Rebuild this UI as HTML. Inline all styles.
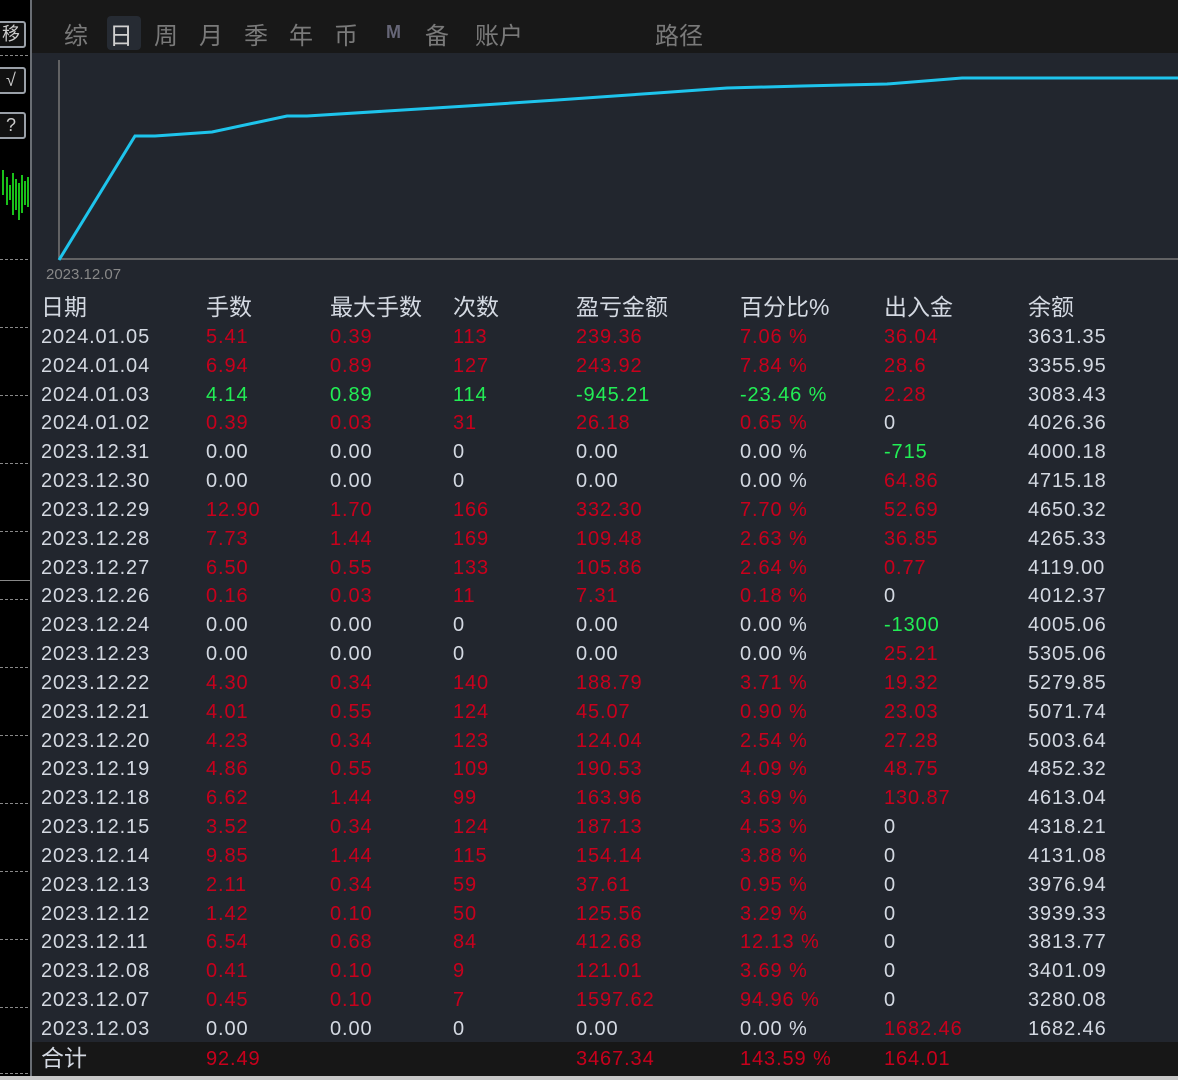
<!DOCTYPE html>
<html><head><meta charset="utf-8"><style>
*{margin:0;padding:0;box-sizing:border-box}
body{width:1178px;height:1080px;background:#000;position:relative;overflow:hidden;font-family:"Liberation Sans","Noto Sans CJK SC",sans-serif}
#left{position:absolute;left:0;top:0;width:30px;height:1080px;background:#000}
.btn{position:absolute;left:-4px;width:30px;height:27px;border:2px solid #9aa0a8;border-radius:3px;color:#ccc;font-size:18px;text-align:center;line-height:22px;background:#111}
.dash{position:absolute;left:0;width:28px;border-top:1px dashed #888}
#main{position:absolute;left:30px;top:0;width:1148px;height:1077px;background:#22262e;border-left:2px solid #6a6e74}
#tabs{position:absolute;left:0;top:0;width:1148px;height:53px;background:#181818}
.tab{position:absolute;top:16px;font-size:24px;color:#7a7a7a}
.cell{position:absolute;font-size:20px;white-space:nowrap;line-height:24px;letter-spacing:0.9px}
.w{color:#d4d9e2}.r{color:#c8001c}.g{color:#22ee55}
#foot{position:absolute;left:0;top:1042px;width:1148px;height:35px;background:#171717}
#bot{position:absolute;left:0;top:1076px;width:1178px;height:4px;background:#c8c8c8}
</style></head><body>
<div id="left">
<div class="btn" style="top:21px">移</div>
<div class="dash" style="top:55px"></div>
<div class="btn" style="top:67px">√</div>
<div class="btn" style="top:112px">?</div>
<svg style="position:absolute;left:0;top:165px" width="30" height="60"><g stroke="#2f2" stroke-width="1.5"><path d="M3 5V30M7 12V40M10 20V35M13 8V50M16 14V45M19 18V55M22 10V48M25 16V40M28 12V42"/></g></svg>
<div class="dash" style="top:259px"></div>
<div class="dash" style="top:327px"></div>
<div class="dash" style="top:395px"></div>
<div class="dash" style="top:463px"></div>
<div class="dash" style="top:531px"></div>
<div style="position:absolute;left:0;top:580px;width:30px;border-top:1px solid #888"></div>
<div class="dash" style="top:599px"></div>
<div class="dash" style="top:667px"></div>
<div class="dash" style="top:735px"></div>
<div class="dash" style="top:803px"></div>
<div class="dash" style="top:871px"></div>
<div class="dash" style="top:939px"></div>
<div class="dash" style="top:1007px"></div>
<div class="dash" style="top:1073px"></div>
</div>
<div id="main">
<div id="tabs">
<div style="position:absolute;left:75px;top:16px;width:34px;height:34px;background:#262b33;border-radius:4px"></div>
<div class="tab" style="left:32px">综</div>
<div class="tab" style="left:77px;color:#d0d0d0">日</div>
<div class="tab" style="left:122px">周</div>
<div class="tab" style="left:167px">月</div>
<div class="tab" style="left:212px">季</div>
<div class="tab" style="left:257px">年</div>
<div class="tab" style="left:302px">币</div>
<div class="tab" style="left:354px;font-size:18px;top:22px;font-weight:bold;color:#667">M</div>
<div class="tab" style="left:393px">备</div>
<div class="tab" style="left:443px">账户</div>
<div class="tab" style="left:623px">路径</div>
</div>
<svg style="position:absolute;left:0;top:53px" width="1148" height="230">
<path d="M27 7V206H1148" stroke="#777" stroke-width="1.5" fill="none"/>
<polyline points="27,207 103,83 123,83 180,79 255,63 275,63 435,53 525,47 625,40 695,35 770,33 855,31 930,25 1148,25" stroke="#1ec4ec" stroke-width="3" fill="none"/>
<text x="14" y="226" fill="#888" font-size="15" font-family="Liberation Sans">2023.12.07</text>
</svg>
<div id="foot"></div>
</div>
<div id="bot"></div>
<div style="position:absolute;left:30px;top:0">
<div class="cell w" style="left:11px;top:295px;font-size:23px;letter-spacing:0">日期</div>
<div class="cell w" style="left:176px;top:295px;font-size:23px;letter-spacing:0">手数</div>
<div class="cell w" style="left:300px;top:295px;font-size:23px;letter-spacing:0">最大手数</div>
<div class="cell w" style="left:423px;top:295px;font-size:23px;letter-spacing:0">次数</div>
<div class="cell w" style="left:546px;top:295px;font-size:23px;letter-spacing:0">盈亏金额</div>
<div class="cell w" style="left:710px;top:295px;font-size:23px;letter-spacing:0">百分比%</div>
<div class="cell w" style="left:854px;top:295px;font-size:23px;letter-spacing:0">出入金</div>
<div class="cell w" style="left:998px;top:295px;font-size:23px;letter-spacing:0">余额</div>
<div id="t"></div>
</div>
<script>
var d=[
["2024.01.05","r5.41","r0.39","r113","r239.36","r7.06 %","r36.04","3631.35"],
["2024.01.04","r6.94","r0.89","r127","r243.92","r7.84 %","r28.6","3355.95"],
["2024.01.03","g4.14","g0.89","g114","g-945.21","g-23.46 %","r2.28","3083.43"],
["2024.01.02","r0.39","r0.03","r31","r26.18","r0.65 %","w0","4026.36"],
["2023.12.31","w0.00","w0.00","w0","w0.00","w0.00 %","g-715","4000.18"],
["2023.12.30","w0.00","w0.00","w0","w0.00","w0.00 %","r64.86","4715.18"],
["2023.12.29","r12.90","r1.70","r166","r332.30","r7.70 %","r52.69","4650.32"],
["2023.12.28","r7.73","r1.44","r169","r109.48","r2.63 %","r36.85","4265.33"],
["2023.12.27","r6.50","r0.55","r133","r105.86","r2.64 %","r0.77","4119.00"],
["2023.12.26","r0.16","r0.03","r11","r7.31","r0.18 %","w0","4012.37"],
["2023.12.24","w0.00","w0.00","w0","w0.00","w0.00 %","g-1300","4005.06"],
["2023.12.23","w0.00","w0.00","w0","w0.00","w0.00 %","r25.21","5305.06"],
["2023.12.22","r4.30","r0.34","r140","r188.79","r3.71 %","r19.32","5279.85"],
["2023.12.21","r4.01","r0.55","r124","r45.07","r0.90 %","r23.03","5071.74"],
["2023.12.20","r4.23","r0.34","r123","r124.04","r2.54 %","r27.28","5003.64"],
["2023.12.19","r4.86","r0.55","r109","r190.53","r4.09 %","r48.75","4852.32"],
["2023.12.18","r6.62","r1.44","r99","r163.96","r3.69 %","r130.87","4613.04"],
["2023.12.15","r3.52","r0.34","r124","r187.13","r4.53 %","w0","4318.21"],
["2023.12.14","r9.85","r1.44","r115","r154.14","r3.88 %","w0","4131.08"],
["2023.12.13","r2.11","r0.34","r59","r37.61","r0.95 %","w0","3976.94"],
["2023.12.12","r1.42","r0.10","r50","r125.56","r3.29 %","w0","3939.33"],
["2023.12.11","r6.54","r0.68","r84","r412.68","r12.13 %","w0","3813.77"],
["2023.12.08","r0.41","r0.10","r9","r121.01","r3.69 %","w0","3401.09"],
["2023.12.07","r0.45","r0.10","r7","r1597.62","r94.96 %","w0","3280.08"],
["2023.12.03","w0.00","w0.00","w0","w0.00","w0.00 %","r1682.46","1682.46"]];
var xs=[11,176,300,423,546,710,854,998],h="";
d.forEach(function(r,i){var y=325+i*28.83;r.forEach(function(c,j){var cl="w",t=c;if(j>0&&j<7){cl=c[0];t=c.slice(1)}h+='<div class="cell '+cl+'" style="left:'+xs[j]+'px;top:'+y+'px">'+t+'</div>'})});
var fy=1046;h+='<div class="cell w" style="left:11px;top:'+fy+'px;font-size:23px;letter-spacing:0">合计</div>';
[[176,"92.49"],[546,"3467.34"],[710,"143.59 %"],[854,"164.01"]].forEach(function(a){h+='<div class="cell r" style="left:'+a[0]+'px;top:'+(fy+1)+'px">'+a[1]+'</div>'});
document.getElementById("t").innerHTML=h;
</script>
</body></html>
